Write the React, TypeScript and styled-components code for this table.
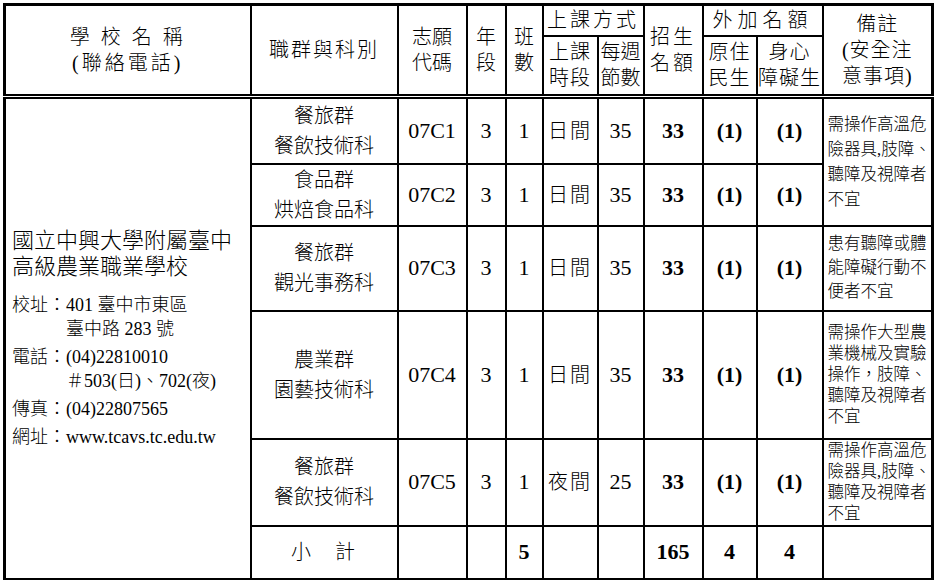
import styled, { createGlobalStyle } from 'styled-components';

const GlobalStyle = createGlobalStyle`
  html, body {
    margin: 0;
    padding: 0;
    background: #fff;
  }
  body {
    font-family: "Liberation Serif", "Noto Sans CJK TC", serif;
    font-weight: 300;
    color: #000;
  }
`;

const Page = styled.div`
  width: 935px;
  height: 580px;
  padding: 3px 0 0 3px;
  box-sizing: border-box;
  background: #fff;
`;

const Table = styled.table`
  border-collapse: collapse;
  table-layout: fixed;
  width: 930px;
  border: 3px solid #000;
`;

const HeadGroup = styled.thead`
  border-bottom: 5px double #000;
`;

const Row = styled.tr<{ $h: number }>`
  height: ${(p) => p.$h}px;
`;

const Head = styled.th<{ $ls?: number }>`
  border: 2px solid #000;
  padding: 0;
  font-weight: 300;
  font-size: 20px;
  line-height: 26px;
  letter-spacing: ${(p) => p.$ls ?? 2}px;
  text-align: center;
  vertical-align: middle;
  white-space: nowrap;
  overflow: hidden;
`;

const Cell = styled.td<{ $bold?: boolean; $size?: number; $ls?: number }>`
  border: 2px solid #000;
  padding: 0;
  font-size: ${(p) => p.$size ?? 22}px;
  font-weight: ${(p) => (p.$bold ? 700 : 300)};
  letter-spacing: ${(p) => p.$ls ?? 0}px;
  line-height: 30px;
  text-align: center;
  vertical-align: middle;
  white-space: nowrap;
  overflow: hidden;
`;

const SchoolCell = styled.td`
  border: 2px solid #000;
  padding: 0 2px 0 6px;
  vertical-align: middle;
  text-align: left;
`;

const SchoolName = styled.div`
  font-size: 22px;
  line-height: 26px;
  margin-bottom: 13px;
`;

const Info = styled.div`
  display: grid;
  grid-template-columns: 54px 1fr;
  row-gap: 4px;
  font-size: 18px;
  line-height: 24px;
`;

const InfoLabel = styled.div`
  white-space: nowrap;
`;

const InfoValue = styled.div`
  white-space: nowrap;
`;

const NoteCell = styled.td<{ $lh: number }>`
  border: 2px solid #000;
  padding: 0 2px 0 4px;
  font-size: 16.5px;
  line-height: ${(p) => p.$lh}px;
  text-align: left;
  vertical-align: middle;
  white-space: nowrap;
  overflow: hidden;
`;

const Line = styled.div``;

const widths = [246, 147, 69, 39, 37, 55, 46, 59, 54, 66, 110];

type Course = {
  group: string;
  dept: string;
  code: string;
  time: string;
  hours: string;
  h: number;
  note?: { lines: string[]; span: number; lh: number };
};

const noteHeat = ['需操作高溫危', '險器具,肢障、', '聽障及視障者', '不宜'];

const courses: Course[] = [
  {
    group: '餐旅群',
    dept: '餐飲技術科',
    code: '07C1',
    time: '日間',
    hours: '35',
    h: 67,
    note: { lines: noteHeat, span: 2, lh: 25 },
  },
  { group: '食品群', dept: '烘焙食品科', code: '07C2', time: '日間', hours: '35', h: 59 },
  {
    group: '餐旅群',
    dept: '觀光事務科',
    code: '07C3',
    time: '日間',
    hours: '35',
    h: 85,
    note: { lines: ['患有聽障或體', '能障礙行動不', '便者不宜'], span: 1, lh: 24 },
  },
  {
    group: '農業群',
    dept: '園藝技術科',
    code: '07C4',
    time: '日間',
    hours: '35',
    h: 128,
    note: {
      lines: ['需操作大型農', '業機械及實驗', '操作，肢障、', '聽障及視障者', '不宜'],
      span: 1,
      lh: 21,
    },
  },
  {
    group: '餐旅群',
    dept: '餐飲技術科',
    code: '07C5',
    time: '夜間',
    hours: '25',
    h: 87,
    note: { lines: noteHeat, span: 1, lh: 21 },
  },
];

export default function App() {
  return (
    <Page>
      <GlobalStyle />
      <Table>
        <colgroup>
          {widths.map((w, i) => (
            <col key={i} style={{ width: w }} />
          ))}
        </colgroup>
        <HeadGroup>
          <Row $h={31}>
            <Head rowSpan={2} $ls={3}>
              學 校 名 稱
              <br />
              (聯絡電話)
            </Head>
            <Head rowSpan={2}>職群與科別</Head>
            <Head rowSpan={2} $ls={0}>
              志願
              <br />
              代碼
            </Head>
            <Head rowSpan={2} $ls={0}>
              年
              <br />段
            </Head>
            <Head rowSpan={2} $ls={0}>
              班
              <br />數
            </Head>
            <Head colSpan={2} $ls={3}>
              上課方式
            </Head>
            <Head rowSpan={2} $ls={3}>
              招生
              <br />
              名額
            </Head>
            <Head colSpan={2} $ls={5}>
              外加名額
            </Head>
            <Head rowSpan={2} $ls={1}>
              備註
              <br />
              (安全注
              <br />
              意事項)
            </Head>
          </Row>
          <Row $h={61}>
            <Head $ls={1}>
              上課
              <br />
              時段
            </Head>
            <Head $ls={0}>
              每週
              <br />
              節數
            </Head>
            <Head $ls={1}>
              原住
              <br />
              民生
            </Head>
            <Head $ls={1}>
              身心
              <br />
              障礙生
            </Head>
          </Row>
        </HeadGroup>
        <tbody>
          {courses.map((c, i) => (
            <Row $h={c.h} key={c.code}>
              {i === 0 && (
                <SchoolCell rowSpan={6}>
                  <SchoolName>
                    國立中興大學附屬臺中
                    <br />
                    高級農業職業學校
                  </SchoolName>
                  <Info>
                    <InfoLabel>校址：</InfoLabel>
                    <InfoValue>
                      401 臺中市東區
                      <br />
                      臺中路 283 號
                    </InfoValue>
                    <InfoLabel>電話：</InfoLabel>
                    <InfoValue>
                      (04)22810010
                      <br />
                      ＃503(日)、702(夜)
                    </InfoValue>
                    <InfoLabel>傳真：</InfoLabel>
                    <InfoValue>(04)22807565</InfoValue>
                    <InfoLabel>網址：</InfoLabel>
                    <InfoValue>www.tcavs.tc.edu.tw</InfoValue>
                  </Info>
                </SchoolCell>
              )}
              <Cell $size={20}>
                <Line>{c.group}</Line>
                <Line>{c.dept}</Line>
              </Cell>
              <Cell>{c.code}</Cell>
              <Cell>3</Cell>
              <Cell>1</Cell>
              <Cell $size={20} $ls={2}>
                {c.time}
              </Cell>
              <Cell>{c.hours}</Cell>
              <Cell $bold>33</Cell>
              <Cell $bold>(1)</Cell>
              <Cell $bold>(1)</Cell>
              {c.note && (
                <NoteCell rowSpan={c.note.span} $lh={c.note.lh}>
                  {c.note.lines.map((l) => (
                    <Line key={l}>{l}</Line>
                  ))}
                </NoteCell>
              )}
            </Row>
          ))}
          <Row $h={54}>
            <Cell $size={20} $ls={2}>
              小　計
            </Cell>
            <Cell />
            <Cell />
            <Cell $bold>5</Cell>
            <Cell />
            <Cell />
            <Cell $bold>165</Cell>
            <Cell $bold>4</Cell>
            <Cell $bold>4</Cell>
            <Cell />
          </Row>
        </tbody>
      </Table>
    </Page>
  );
}
